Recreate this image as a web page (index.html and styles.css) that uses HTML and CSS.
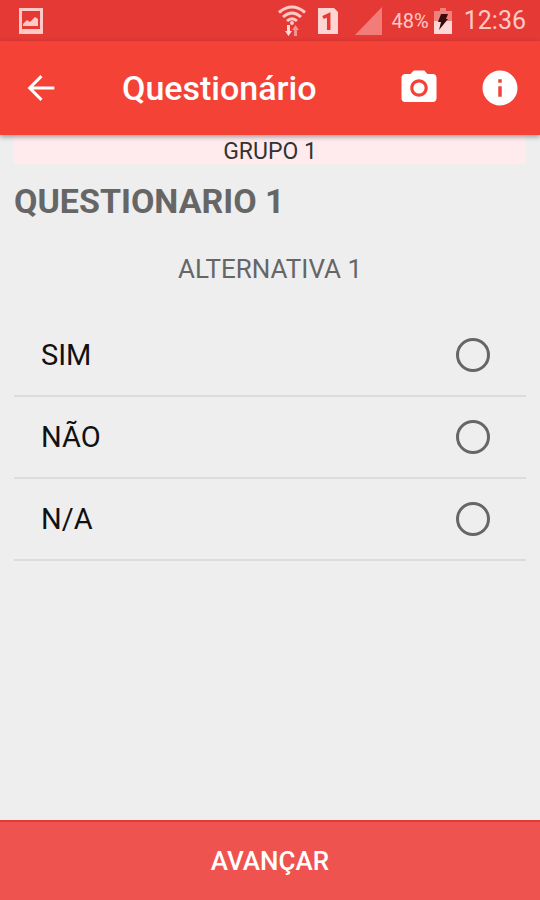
FILE: index.html
```html
<!DOCTYPE html>
<html lang="pt-BR">
<head>
<meta charset="utf-8">
<meta name="viewport" content="width=device-width, initial-scale=1">
<title>Questionário</title>
<link rel="stylesheet" href="styles.css">
</head>
<body>
<div class="screen">
  <div class="status">
    <svg class="status-picture" width="24" height="28" viewBox="0 0 24 28" aria-hidden="true">
      <path fill="#ffc9c6" fill-rule="evenodd" d="M0 1h24v26H0zM3 4v18h18V4z"/>
      <path fill="#ffc9c6" d="M4 19v-2l4-4 3 2 5-5 3 2v7z"/>
    </svg>
    <svg class="status-wifi" width="28" height="32" viewBox="0 0 28 32" aria-hidden="true">
      <g fill="none" stroke="#ffc9c6" stroke-width="3">
        <path d="M1 7.500Q14-3.500 27 7.500"/>
        <path d="M5 12Q14 4 23 12"/>
        <path d="M9 16Q14 11.500 19 16"/>
      </g>
      <circle cx="14" cy="18" r="2" fill="#ffc9c6"/>
      <path fill="#ffd9d7" d="M9 20h3v6h2l-3.500 5L7 26h2z"/>
      <path fill="#f5928e" d="M16 31h3v-6h2l-3.500-5-3.500 5h2z"/>
    </svg>
    <svg class="status-sim" width="22" height="28" viewBox="0 0 22 28" aria-hidden="true">
      <path fill="#ffd5d3" d="M1 1h16l4 4v22H1z"/>
      <path fill="none" stroke="#e53935" stroke-width="3.500" d="M6 10.500 11.700 8v15"/>
    </svg>
    <svg class="status-signal" width="27" height="28" viewBox="0 0 27 28" aria-hidden="true">
      <path fill="#f27c78" d="M27 0v28H0z"/>
    </svg>
    <span class="battery-level">48%</span>
    <svg class="status-battery" width="18" height="26" viewBox="0 0 18 26" aria-hidden="true">
      <path fill="#f0827e" d="M6 0h6v3h6v11H0V3h6z"/>
      <path fill="#ffd9d7" d="M0 13h18v13H0z"/>
      <path fill="#3a0d0c" d="M7 6h7l-2 5h2L5 22l2-8H4z"/>
    </svg>
    <time class="clock">12:36</time>
  </div>

  <header class="appbar">
    <button class="icon-button" type="button" aria-label="Voltar">
      <svg width="40" height="40" viewBox="0 0 24 24" aria-hidden="true"><path fill="none" stroke="#fff" stroke-width="1.800" d="M20 12H5.500M12.300 4.900 5.200 12l7.100 7.100"/></svg>
    </button>
    <h1 class="title">Questionário</h1>
    <button class="icon-button" type="button" aria-label="Câmera">
      <svg width="42" height="42" viewBox="0 0 24 24" aria-hidden="true"><circle cx="12" cy="12" r="3.200" fill="#fff"/><path fill="#fff" d="M9 2 7.170 4H4c-1.100 0-2 .9-2 2v12c0 1.100.9 2 2 2h16c1.100 0 2-.9 2-2V6c0-1.100-.9-2-2-2h-3.170L15 2H9zm3 15c-2.760 0-5-2.240-5-5s2.240-5 5-5 5 2.240 5 5-2.240 5-5 5z"/></svg>
    </button>
    <button class="icon-button" type="button" aria-label="Informações">
      <svg width="42" height="42" viewBox="0 0 24 24" aria-hidden="true"><path fill="#fff" d="M12 2C6.480 2 2 6.480 2 12s4.480 10 10 10 10-4.480 10-10S17.520 2 12 2zm1 15h-2v-6h2v6zm0-8h-2V7h2v2z"/></svg>
    </button>
  </header>

  <main class="content">
    <p class="group">GRUPO 1</p>
    <h2 class="question">QUESTIONARIO 1</h2>
    <fieldset class="options">
      <legend class="prompt">ALTERNATIVA 1</legend>
      <label class="option">SIM<input class="radio" type="radio" name="resposta" value="sim"></label>
      <label class="option">NÃO<input class="radio" type="radio" name="resposta" value="nao"></label>
      <label class="option">N/A<input class="radio" type="radio" name="resposta" value="na"></label>
    </fieldset>
  </main>

  <button class="next" type="button">AVANÇAR</button>
</div>
</body>
</html>
```
FILE: styles.css
```css
* {
  box-sizing: border-box;
}

body {
  margin: 0;
  background: #eee;
  color: #111;
  font-family: Roboto, "Liberation Sans", sans-serif;
}

.screen {
  display: flex;
  flex-direction: column;
  min-height: 100vh;
}

.status {
  display: flex;
  align-items: center;
  height: 41px;
  padding: 0 14px 0 19px;
  background: #e53935;
  color: #ffc9c6;
}

.status-wifi {
  margin-left: auto;
}

.status-sim {
  margin-left: 11px;
}

.status-signal {
  margin-left: 16px;
}

.battery-level {
  margin-left: 10px;
  font-size: 20px;
}

.status-battery {
  margin-left: 5px;
}

.clock {
  margin-left: 12px;
  font-size: 25px;
}

.appbar {
  position: relative;
  display: flex;
  align-items: center;
  height: 94px;
  background: #f44336;
  box-shadow: 0 2px 5px rgba(0, 0, 0, 0.35);
}

.icon-button {
  display: flex;
  align-items: center;
  justify-content: center;
  width: 81px;
  height: 80px;
  padding: 0;
  border: 0;
  background: none;
}

.title {
  flex: 1;
  margin: 0;
  padding-left: 41px;
  color: #fff;
  font-size: 34px;
  font-weight: 500;
}

.content {
  flex: 1;
  padding: 0 14px;
}

.group {
  margin: 0;
  padding-top: 5px;
  background: #ffebee;
  color: #333;
  font-size: 23px;
  line-height: 24px;
  text-align: center;
}

.prompt {
  width: 100%;
  padding: 32px 0 30px;
  color: #666;
  font-size: 26px;
  line-height: 32px;
  text-align: center;
}

.question {
  margin: 17px 0 0;
  color: #666;
  font-size: 34px;
  font-weight: 700;
  line-height: 40px;
}

.options {
  min-width: 0;
  margin: 0;
  padding: 0;
  border: 0;
}

.option {
  display: flex;
  align-items: center;
  justify-content: space-between;
  height: 82px;
  padding: 0 36px 0 27px;
  border-bottom: 2px solid #dcdcdc;
  font-size: 29px;
}

.radio {
  width: 34px;
  height: 34px;
  margin: 0;
  appearance: none;
  border: 3px solid #666;
  border-radius: 50%;
}

.radio:checked {
  background: radial-gradient(circle, #f44336 45%, transparent 50%);
}

.next {
  height: 80px;
  padding: 0;
  border: 0;
  border-top: 2px solid #e53935;
  background: #ef5350;
  color: #fff;
  font-family: inherit;
  font-size: 26px;
  font-weight: 500;
}
```
